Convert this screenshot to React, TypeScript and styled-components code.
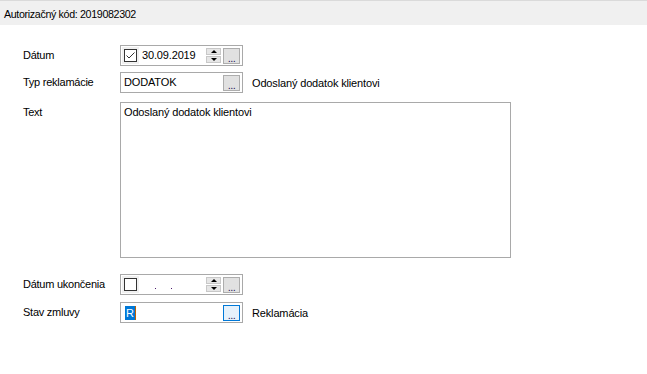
import React from "react";
import styled, { createGlobalStyle } from "styled-components";

const Global = createGlobalStyle`
  html, body { margin: 0; padding: 0; background: #fff; }
  body { font-family: "Liberation Sans", Arial, sans-serif; font-size: 11px; color: #000; }
`;

const Page = styled.div`
  width: 647px;
  height: 374px;
  background: #fff;
  display: flex;
  flex-direction: column;
`;

const Header = styled.div`
  border-top: 1px solid #dadada;
  background: #f0f0f0;
  padding: 7px 4px 0;
  box-sizing: border-box;
  height: 25px;
  font-size: 10.7px;
  line-height: 13px;
  letter-spacing: -0.35px;
`;

const Form = styled.div`
  display: flex;
  flex-direction: column;
  padding: 20px 0 0 23px;
`;

const Row = styled.div<{ $mt?: number; $top?: boolean }>`
  display: flex;
  align-items: ${(p) => (p.$top ? "flex-start" : "center")};
  margin-top: ${(p) => p.$mt ?? 0}px;
`;

const Label = styled.div`
  width: 97px;
  line-height: 21px;
  letter-spacing: -0.25px;
  flex: none;
`;

const Field = styled.div`
  width: 123px;
  height: 21px;
  box-sizing: border-box;
  border: 1px solid #a9a9a9;
  background: #fff;
  display: flex;
  align-items: center;
  padding: 0 2px 0 1px;
  flex: none;
`;

const CheckCell = styled.div`
  width: 17px;
  height: 17px;
  background: #f0f0f0;
  display: flex;
  align-items: center;
  justify-content: center;
  flex: none;
`;

const CheckBox = styled.div`
  width: 13px;
  height: 13px;
  box-sizing: border-box;
  border: 1px solid #333;
  background: #fff;
  display: flex;
`;

const Value = styled.div<{ $ml?: number }>`
  flex: 1;
  margin-left: ${(p) => p.$ml ?? 2}px;
  line-height: 15px;
  white-space: nowrap;
  letter-spacing: -0.15px;
  display: flex;
  align-items: center;
`;

const Dot = styled.span<{ $ml: number }>`
  display: inline-block;
  margin-left: ${(p) => p.$ml}px;
  width: 1px;
  height: 1px;
  background: #4b1a6e;
  margin-top: 8px;
`;

const Spinner = styled.div`
  width: 15px;
  height: 15px;
  display: flex;
  flex-direction: column;
  justify-content: space-between;
  margin-right: 2px;
  flex: none;
`;

const SpinPart = styled.div`
  background: #e6e6e6;
  border: 1px solid #c8c8c8;
  box-sizing: border-box;
  display: flex;
  align-items: center;
  justify-content: center;
  height: 7px;
`;

const Arrow = styled.div<{ $down?: boolean }>`
  width: 0;
  height: 0;
  border-left: 3px solid transparent;
  border-right: 3px solid transparent;
  ${(p) =>
    p.$down ? "border-top: 3px solid #000;" : "border-bottom: 3px solid #000;"}
`;

const DotsButton = styled.div<{ $focus?: boolean }>`
  width: 17px;
  height: 16px;
  box-sizing: border-box;
  border: 1px solid ${(p) => (p.$focus ? "#0078d7" : "#adadad")};
  background: ${(p) => (p.$focus ? "#e5f1fb" : "#e1e1e1")};
  color: #2a1a5e;
  font-size: 11px;
  line-height: 18px;
  text-align: center;
  letter-spacing: -0.5px;
  flex: none;
  overflow: hidden;
`;

const SideText = styled.div`
  margin-left: 9px;
  letter-spacing: -0.15px;
  white-space: nowrap;
`;

const TextArea = styled.div`
  width: 391px;
  height: 156px;
  box-sizing: border-box;
  border: 1px solid #a9a9a9;
  padding: 3px 3px;
  line-height: 13px;
  letter-spacing: -0.15px;
`;

const Selected = styled.span`
  background: #0078d7;
  color: #fff;
  padding: 0 1px;
  line-height: 14px;
`;

const Caret = styled.span`
  display: inline-block;
  width: 1px;
  height: 14px;
  background: #c06000;
`;

const CheckMark = () => (
  <svg width="11" height="11" viewBox="0 0 11 11">
    <polyline points="1.5,5.5 4,8 9.5,2.5" fill="none" stroke="#333" strokeWidth="1" />
  </svg>
);

const SpinnerControl = () => (
  <Spinner>
    <SpinPart>
      <Arrow />
    </SpinPart>
    <SpinPart>
      <Arrow $down />
    </SpinPart>
  </Spinner>
);

export default function App() {
  return (
    <Page>
      <Global />
      <Header>Autorizačný kód: 2019082302</Header>
      <Form>
        <Row>
          <Label>Dátum</Label>
          <Field>
            <CheckCell>
              <CheckBox>
                <CheckMark />
              </CheckBox>
            </CheckCell>
            <Value $ml={3}>30.09.2019</Value>
            <SpinnerControl />
            <DotsButton>...</DotsButton>
          </Field>
        </Row>
        <Row $mt={6}>
          <Label>Typ reklamácie</Label>
          <Field>
            <Value $ml={2}>DODATOK</Value>
            <DotsButton>...</DotsButton>
          </Field>
          <SideText>Odoslaný dodatok klientovi</SideText>
        </Row>
        <Row $mt={9} $top>
          <Label>Text</Label>
          <TextArea>Odoslaný dodatok klientovi</TextArea>
        </Row>
        <Row $mt={16}>
          <Label>Dátum ukončenia</Label>
          <Field>
            <CheckCell>
              <CheckBox />
            </CheckCell>
            <Value $ml={3}>
              <Dot $ml={13} />
              <Dot $ml={15} />
            </Value>
            <SpinnerControl />
            <DotsButton>...</DotsButton>
          </Field>
        </Row>
        <Row $mt={7}>
          <Label>Stav zmluvy</Label>
          <Field>
            <Value $ml={3}>
              <Selected>R</Selected>
              <Caret />
            </Value>
            <DotsButton $focus>...</DotsButton>
          </Field>
          <SideText>Reklamácia</SideText>
        </Row>
      </Form>
    </Page>
  );
}
